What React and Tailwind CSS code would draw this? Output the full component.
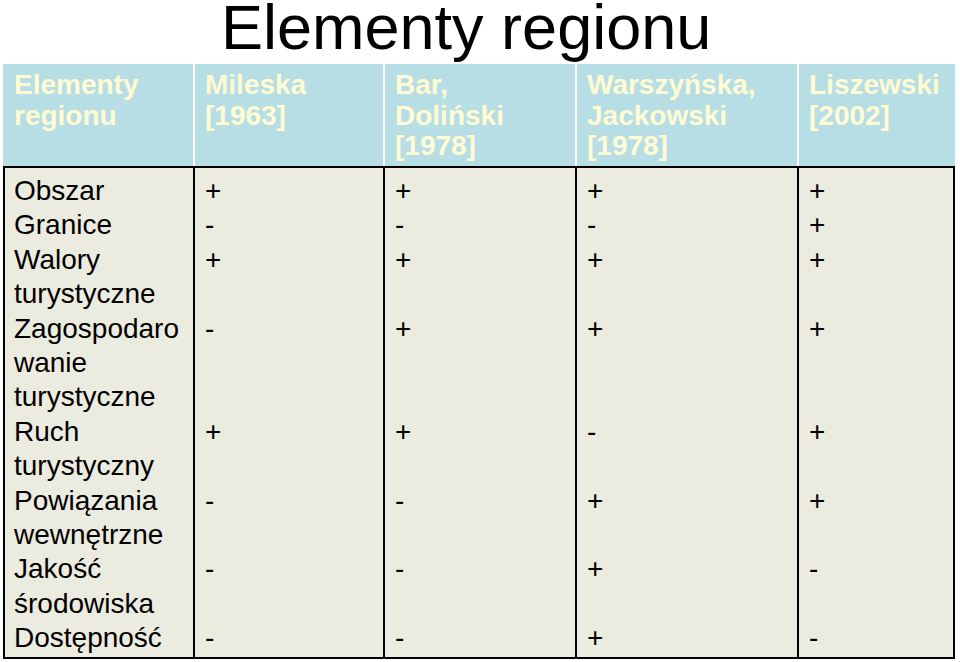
const columns = [
  ["Mileska", "[1963]"],
  ["Bar,", "Doliński", "[1978]"],
  ["Warszyńska,", "Jackowski", "[1978]"],
  ["Liszewski", "[2002]"],
];

const rows = [
  { name: ["Obszar"], marks: ["+", "+", "+", "+"] },
  { name: ["Granice"], marks: ["-", "-", "-", "+"] },
  { name: ["Walory", "turystyczne"], marks: ["+", "+", "+", "+"] },
  { name: ["Zagospodaro", "wanie", "turystyczne"], marks: ["-", "+", "+", "+"] },
  { name: ["Ruch", "turystyczny"], marks: ["+", "+", "-", "+"] },
  { name: ["Powiązania", "wewnętrzne"], marks: ["-", "-", "+", "+"] },
  { name: ["Jakość", "środowiska"], marks: ["-", "-", "+", "-"] },
  { name: ["Dostępność"], marks: ["-", "-", "+", "-"] },
];

export default function App() {
  return (
    <div
      className="w-[960px] h-[662px] bg-white overflow-hidden"
      style={{ fontFamily: '"Liberation Sans", Arial, sans-serif' }}
    >
      <div className="h-[64px]">
        <h1 className="pl-[221px] text-[63px] leading-[54px] text-black">
          Elementy regionu
        </h1>
      </div>

      <div className="ml-[3px] w-[952px]">
        {/* header */}
        <div className="grid grid-cols-[190px_190px_192px_222px_158px] h-[102px] bg-[#b7dee4] text-[#fffbd3] font-bold text-[28px] leading-[30.5px]">
          <div className="pl-[11px] pt-[6px]">
            Elementy
            <br />
            regionu
          </div>
          {columns.map((lines, i) => (
            <div key={i} className="border-l-2 border-white pl-[10px] pt-[6px]">
              {lines.map((l, j) => (
                <div key={j}>{l}</div>
              ))}
            </div>
          ))}
        </div>

        {/* body */}
        <div className="border-2 border-black bg-[#ecebe0] text-black text-[28px] leading-[34.4px]">
          {rows.map((row, i) => {
            const pad =
              i === 0 ? "pt-[6px]" : i === rows.length - 1 ? "pb-[1px]" : "";
            return (
              <div
                key={i}
                className="grid grid-cols-[188px_190px_192px_222px_156px]"
              >
                <div className={`pl-[9px] ${pad}`}>
                  {row.name.map((n, j) => (
                    <div key={j}>{n}</div>
                  ))}
                </div>
                {row.marks.map((m, j) => (
                  <div
                    key={j}
                    className={`border-l-2 border-black pl-[10px] ${pad}`}
                  >
                    {m}
                  </div>
                ))}
              </div>
            );
          })}
        </div>
      </div>
    </div>
  );
}
